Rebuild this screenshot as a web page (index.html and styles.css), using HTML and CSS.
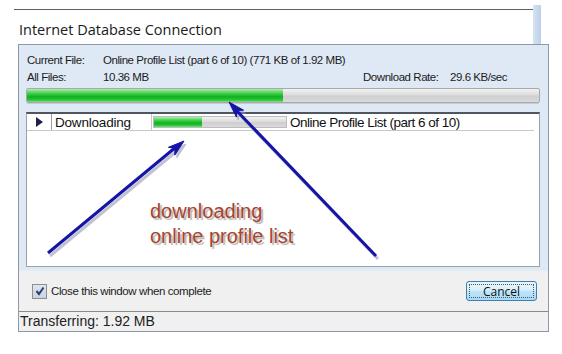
FILE: index.html
```html
<!DOCTYPE html>
<html lang="en">
  <head>
    <meta charset="UTF-8" />
    <title>Internet Database Connection</title>
    <link rel="stylesheet" href="styles.css">
  </head>
  <body>
    <div class="screen">
      <div class="window">
        <div class="window-top"></div>
        <h1 class="title">Internet Database Connection</h1>

        <div class="dialog">
          <!-- Transfer info + file list -->
          <div class="panel">
            <div class="info-row">
              <span class="info-label">Current File:</span>
              <span class="info-value">Online Profile List (part 6 of 10) (771 KB of 1.92 MB)</span>
            </div>
            <div class="info-row">
              <span class="info-label">All Files:</span>
              <span class="info-value info-grow">10.36 MB</span>
              <span class="rate-label">Download Rate:</span>
              <span class="rate-value">29.6 KB/sec</span>
            </div>
            <div class="bar main-bar">
              <div class="bar-fill" style="width: 50%"></div>
            </div>

            <div class="list">
              <div class="list-row">
                <span class="cell cell-arrow">
                  <svg width="7" height="10" viewBox="0 0 7 10"><path d="M0 0 L7 5 L0 10 Z" fill="#1c2148"/></svg>
                </span>
                <span class="cell cell-status">Downloading</span>
                <span class="cell cell-progress">
                  <div class="bar row-bar">
                    <div class="bar-fill" style="width: 36%"></div>
                  </div>
                </span>
                <span class="cell cell-name">Online Profile List (part 6 of 10)</span>
              </div>
            </div>
          </div>

          <div class="footer">
            <label class="check">
              <span class="check-box">
                <svg width="10" height="10" viewBox="0 0 10 10"><path d="M1.5 5 L4 8 L8.5 1.5" fill="none" stroke="#2a3f7a" stroke-width="2"/></svg>
              </span>
              Close this window when complete
            </label>
            <button class="cancel">Cancel</button>
          </div>

          <div class="status">Transferring: 1.92 MB</div>
        </div>
      </div>

      <!-- Annotation overlay -->
      <svg class="arrows" width="562" height="354" viewBox="0 0 562 354">
        <g fill="#8f8fb0" stroke="#8f8fb0" opacity="0.55" transform="translate(2 3)">
          <line x1="48" y1="253" x2="176" y2="147" stroke-width="3"/>
          <polygon points="184,141 174.8,155.1 174.9,148.4 168.4,147.3"/>
          <line x1="376" y1="256" x2="236" y2="110" stroke-width="3"/>
          <polygon points="229,102 243.6,110.2 237,110.5 236.4,117.1"/>
        </g>
        <g fill="#1414a6" stroke="#1414a6">
          <line x1="48" y1="253" x2="176" y2="147" stroke-width="3"/>
          <polygon points="184,141 174.8,155.1 174.9,148.4 168.4,147.3"/>
          <line x1="376" y1="256" x2="236" y2="110" stroke-width="3"/>
          <polygon points="229,102 243.6,110.2 237,110.5 236.4,117.1"/>
        </g>
      </svg>
      <div class="note">downloading<br>online profile list</div>
    </div>
  </body>
</html>
```

FILE: styles.css
```css
body {
  margin: 0;
  background: #fff;
  font-family: "Liberation Sans", Arial, sans-serif;
  color: #000;
}

.screen {
  position: relative;
  width: 562px;
  height: 354px;
  overflow: hidden;
}

.window {
  position: relative;
  padding: 9px 0 0 14px;
}

.window-top {
  width: 521px;
  height: 1px;
  background: #5f5f5f;
}

/* light blue frame edge on the right */
.window::after {
  content: "";
  position: absolute;
  top: 5px;
  left: 533px;
  width: 8px;
  height: 39px;
  background: linear-gradient(to right, #d6e3f2, #bcd0ea);
}

.title {
  margin: 10px 0 0 5px;
  height: 24px;
  font-family: "Open Sans", "Liberation Sans", sans-serif;
  font-weight: normal;
  font-size: 14.5px;
  line-height: 20px;
  color: #1a1a1a;
}

.dialog {
  position: relative;
  z-index: 1;
  margin-left: 4px;
  width: 529px;
  border: 1px solid #8d99a8;
  background: #f0f0f0;
}

.panel {
  background: #dfe9f5;
  padding: 7px 8px 3px 7px;
}

.info-row {
  display: flex;
  height: 17px;
  line-height: 17px;
  font-size: 11.5px;
  letter-spacing: -0.45px;
  color: #1b1b1b;
}

.info-label {
  width: 76px;
  padding-left: 1px;
}

.info-grow {
  flex: 1;
}

.rate-label {
  width: 87px;
}

.rate-value {
  width: 90px;
}

.bar {
  border: 1px solid #a9a9a9;
  border-radius: 2px;
  background: linear-gradient(to bottom, #f2f2f2 0%, #dcdcdc 45%, #cfcfcf 55%, #dadada 100%);
  overflow: hidden;
}

.bar-fill {
  height: 100%;
  background: linear-gradient(to bottom, #b4ecb4 0%, #49d452 30%, #10b020 60%, #2bc83a 85%, #86dd8c 100%);
}

.main-bar {
  margin-top: 2px;
  height: 13px;
  box-shadow: 0 2px 0 -1px #c2cbd6;
}

.list {
  margin-top: 9px;
  height: 152px;
  background: #fff;
  border: 1px solid #9aa3ad;
  border-top: 2px solid #4f5660;
}

.list-row {
  display: flex;
  height: 16px;
  border-bottom: 1px solid #c8c8c8;
  margin-right: 5px;
}

.cell {
  display: flex;
  align-items: center;
  font-size: 13.5px;
  letter-spacing: -0.2px;
  color: #111;
}

.cell-arrow {
  width: 15px;
  padding-left: 9px;
  border-right: 1px solid #9c9c9c;
}

.cell-status {
  width: 96px;
  padding-left: 3px;
  border-right: 1px solid #c8c8c8;
}

.cell-progress {
  width: 134px;
  padding: 0 1px;
}

.row-bar {
  width: 132px;
  height: 10px;
  border-color: #bdbdbd;
  border-radius: 0;
}

.cell-name {
  padding-left: 2px;
  letter-spacing: -0.5px;
}

.footer {
  display: flex;
  align-items: center;
  justify-content: space-between;
  height: 40px;
  padding: 0 11px 0 13px;
  border-top: 1px solid #e4ecf5;
}

.check {
  display: flex;
  align-items: center;
  gap: 4px;
  font-size: 11.5px;
  letter-spacing: -0.4px;
  color: #1b1b1b;
}

.check-box {
  display: flex;
  align-items: center;
  justify-content: center;
  width: 13px;
  height: 13px;
  border: 1px solid #8e8f8f;
  background: linear-gradient(to bottom, #dfe6ee, #c8d3df);
}

.cancel {
  width: 71px;
  height: 20px;
  padding: 0;
  border: 1px solid #3c7fb1;
  border-radius: 3px;
  background: linear-gradient(to bottom, #eaf6fd 0%, #d9f0fc 45%, #bee6fd 50%, #a7d9f5 100%);
  outline: 1px dotted #555;
  outline-offset: -4px;
  font-family: "Open Sans", "Liberation Sans", sans-serif;
  font-size: 12px;
  color: #111;
}

.status {
  height: 19px;
  line-height: 19px;
  padding-left: 1px;
  border-top: 1px solid #8a8a8a;
  font-size: 14px;
  color: #222;
}

.arrows {
  position: absolute;
  top: 0;
  left: 0;
  z-index: 2;
}

.note {
  position: absolute;
  z-index: 2;
  top: 199px;
  left: 150px;
  font-size: 20px;
  line-height: 25px;
  color: #a8432c;
  text-shadow: 2px 2px 1px #b4b4b4;
}
```
